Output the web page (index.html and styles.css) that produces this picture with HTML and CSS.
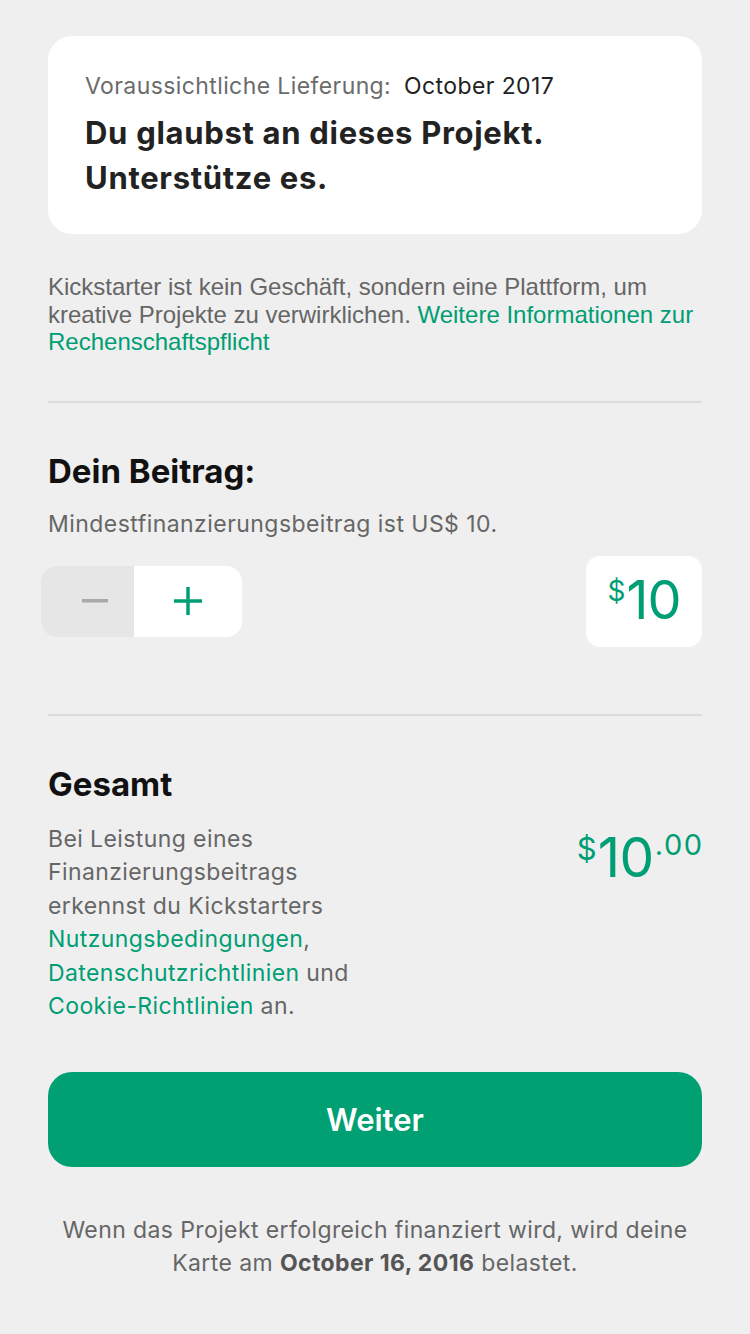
FILE: index.html
```html
<!DOCTYPE html>
<html lang="de">
<head>
<meta charset="utf-8">
<title>Beitrag</title>
<link rel="stylesheet" href="styles.css">
</head>
<body>
<main class="page">
  <section class="card">
    <p class="delivery"><span class="delivery-label">Voraussichtliche Lieferung:</span> <span class="delivery-date">October 2017</span></p>
    <h1 class="card-title">Du glaubst an dieses Projekt. Unterstütze es.</h1>
  </section>

  <p class="notice">Kickstarter ist kein Geschäft, sondern eine Plattform, um kreative Projekte zu verwirklichen. <a class="link" href="#">Weitere Informationen zur Rechenschaftspflicht</a></p>

  <hr class="divider">

  <section class="pledge">
    <h2 class="section-title">Dein Beitrag:</h2>
    <p class="hint">Mindestfinanzierungsbeitrag ist US$ 10.</p>
    <div class="pledge-row">
      <div class="stepper">
        <button class="step step-minus" aria-label="minus">
          <svg width="26" height="4" viewBox="0 0 26 4"><rect x="0" y="0" width="26" height="3.5" fill="#a9a9a9"/></svg>
        </button>
        <button class="step step-plus" aria-label="plus">
          <svg width="28" height="28" viewBox="0 0 28 28"><rect x="0" y="12.25" width="28" height="3.5" fill="#009e74"/><rect x="12.25" y="0" width="3.5" height="28" fill="#009e74"/></svg>
        </button>
      </div>
      <div class="amount-box"><span class="cur">$</span><span class="amount">10</span></div>
    </div>
  </section>

  <hr class="divider divider-2">

  <section class="total">
    <h2 class="section-title">Gesamt</h2>
    <div class="total-row">
      <p class="terms">Bei Leistung eines Finanzierungsbeitrags erkennst du Kickstarters <a class="link" href="#">Nutzungsbedingungen</a>, <a class="link" href="#">Datenschutzrichtlinien</a> und <a class="link" href="#">Cookie-Richtlinien</a> an.</p>
      <div class="total-amount"><span class="cur">$</span><span class="amount">10</span><span class="cents">.00</span></div>
    </div>
  </section>

  <button class="cta">Weiter</button>

  <p class="footer">Wenn das Projekt erfolgreich finanziert wird, wird deine Karte am <strong>October 16, 2016</strong> belastet.</p>
</main>
</body>
</html>
```

FILE: styles.css
```css
* { box-sizing: border-box; }
html, body { margin: 0; padding: 0; }
body {
  background: #efefef;
  font-family: Inter, "Noto Sans", sans-serif;
  color: #222;
  width: 750px;
  height: 1334px;
  overflow: hidden;
}
.page {
  padding: 36px 48px 0 48px;
  display: flex;
  flex-direction: column;
}
.card {
  background: #fff;
  border-radius: 24px;
  padding: 35px 37px 34px 37px;
}
.delivery {
  margin: 0;
  font-size: 23px;
  line-height: 30px;
  letter-spacing: 0.4px;
}
.delivery-label { color: #6b6b6b; margin-right: 6px; }
.delivery-date { color: #222; }
.card-title {
  margin: 9px 0 0 0;
  font-size: 31px;
  line-height: 45px;
  font-weight: 700;
  color: #222;
  letter-spacing: 0.7px;
  max-width: 500px;
}
.notice {
  margin: 39px 0 0 0;
  font-family: "Liberation Sans", Arial, sans-serif;
  font-size: 24px;
  line-height: 27.5px;
  color: #666;
}
.link { color: #009e74; text-decoration: none; }
.divider {
  border: 0;
  height: 2px;
  background: #dcdcdc;
  margin: 45px 0 0 0;
}
.divider-2 { margin-top: 67px; }
.pledge { padding-top: 49px; }
.section-title {
  margin: 0;
  font-size: 33px;
  line-height: 38px;
  font-weight: 700;
  color: #111;
  letter-spacing: 0;
}
.hint {
  margin: 19px 0 0 0;
  font-size: 23px;
  line-height: 30px;
  color: #666;
  letter-spacing: 0.45px;
}
.pledge-row {
  margin-top: 17px;
  display: flex;
  justify-content: space-between;
  align-items: center;
}
.stepper {
  margin-left: -7px;
  display: flex;
  width: 201px;
  height: 71px;
  border-radius: 16px;
  overflow: hidden;
  background: #fff;
}
.step {
  border: 0;
  padding: 0;
  margin: 0;
  display: flex;
  align-items: center;
  justify-content: center;
  font: inherit;
}
.step-minus { width: 93px; background: #e6e6e6; padding-left: 14px; }
.step-plus { flex: 1; background: #fff; }
.amount-box {
  background: #fff;
  border-radius: 14px;
  width: 116px;
  height: 91px;
  display: flex;
  align-items: center;
  justify-content: center;
  color: #009e74;
  padding-bottom: 2px;
}
.amount-box .cur {
  font-size: 28px;
  line-height: 30px;
  align-self: flex-start;
  margin-top: 20px;
  margin-right: 1px;
}
.amount-box .amount {
  font-size: 54px;
  line-height: 60px;
  letter-spacing: -1px;
}
.total { padding-top: 49px; }
.total-row {
  margin-top: 20px;
  display: flex;
  justify-content: space-between;
  align-items: flex-start;
}
.terms {
  margin: 0;
  width: 330px;
  font-size: 23px;
  line-height: 33.5px;
  color: #666;
  letter-spacing: 0.4px;
}
.total-amount {
  display: flex;
  align-items: flex-start;
  color: #009e74;
  margin-top: 4px;
}
.total-amount .cur { margin-top: 4px; font-size: 31px; line-height: 36px; margin-right: 1px; }
.total-amount .amount {
  font-size: 55px;
  line-height: 60px;
  letter-spacing: -0.5px;
}
.cents {
  font-size: 29px;
  line-height: 30px;
  margin-top: 3px;
  margin-left: 1px;
  letter-spacing: 1.5px;
  margin-right: -1.5px;
}
.cta {
  margin-top: 48px;
  height: 95px;
  border: 0;
  border-radius: 24px;
  background: #00a072;
  color: #fff;
  font-family: Inter, "Noto Sans", sans-serif;
  font-size: 31px;
  font-weight: 600;
  letter-spacing: 0;
}
.footer {
  margin: 47px 0 0 0;
  text-align: center;
  font-size: 23px;
  line-height: 33px;
  color: #666;
  letter-spacing: 0.4px;
  padding: 0 4px;
}
.footer strong { font-weight: 700; color: #555; }
```
